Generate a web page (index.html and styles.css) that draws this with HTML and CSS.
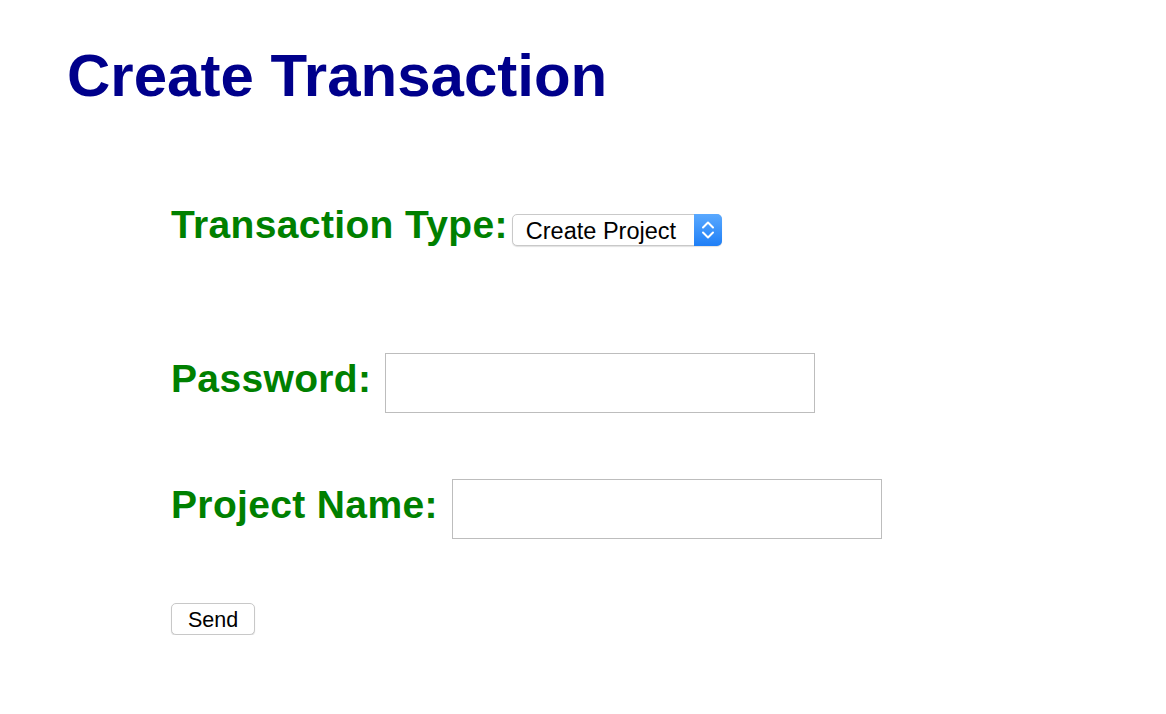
FILE: index.html
```html
<!DOCTYPE html>
<html>
<head>
<meta charset="utf-8">
<title>Create Transaction</title>
<link rel="stylesheet" href="styles.css">
</head>
<body>
<h1 class="title">Create Transaction</h1>
<form class="form">
  <div class="row row-type">
    <label class="label" for="type">Transaction Type:</label>
    <div class="select-wrap">
      <select class="select" id="type">
        <option>Create Project</option>
      </select>
      <span class="select-arrow">
        <svg width="28" height="32" viewBox="0 0 28 32">
          <path d="M9 13.5 L14 8.5 L19 13.5" fill="none" stroke="#fff" stroke-width="2" stroke-linecap="round" stroke-linejoin="round"/>
          <path d="M9 18.5 L14 23.5 L19 18.5" fill="none" stroke="#fff" stroke-width="2" stroke-linecap="round" stroke-linejoin="round"/>
        </svg>
      </span>
    </div>
  </div>
  <div class="row row-field">
    <label class="label label-field" for="pw">Password:</label>
    <input class="input" id="pw" type="password">
  </div>
  <div class="row row-field">
    <label class="label label-field" for="pn">Project Name:</label>
    <input class="input" id="pn" type="text">
  </div>
  <button class="send" type="button">Send</button>
</form>
</body>
</html>
```
FILE: styles.css
```css
html, body {
  margin: 0;
  padding: 0;
  background: #fff;
}
body {
  font-family: "Liberation Sans", Arial, sans-serif;
}
.title {
  margin: 41px 0 0 67px;
  font-size: 60px;
  line-height: 69px;
  font-weight: bold;
  color: #00008b;
}
.form {
  padding-left: 171px;
  margin-top: 92px;
  display: flex;
  flex-direction: column;
  align-items: flex-start;
}
.row {
  display: flex;
  align-items: flex-start;
}
.label {
  font-size: 39px;
  line-height: 45px;
  font-weight: bold;
  letter-spacing: 0.35px;
  color: #008000;
}
.row-type .label {
  margin-right: 4px;
}
.select-wrap {
  position: relative;
  margin-top: 12px;
  width: 210px;
  height: 32px;
}
.select {
  -webkit-appearance: none;
  appearance: none;
  width: 210px;
  height: 32px;
  box-sizing: border-box;
  border: 1px solid #c9c9c9;
  border-radius: 5px;
  background: #fff;
  box-shadow: 0 1px 1px rgba(0,0,0,0.12);
  font-family: "Liberation Sans", Arial, sans-serif;
  font-size: 23.5px;
  color: #000;
  padding: 1px 0 0 13px;
  margin: 0;
  outline: none;
}
.select-arrow {
  position: absolute;
  top: 0;
  right: 0;
  width: 28px;
  height: 32px;
  border-radius: 0 5px 5px 0;
  background: linear-gradient(#5aa9ff, #1f7ff6);
  pointer-events: none;
  display: flex;
}
.row-field {
  margin-top: 106px;
}
.row-field + .row-field {
  margin-top: 66px;
}
.label-field {
  margin-top: 3px;
  margin-right: 14px;
}
.input {
  width: 430px;
  height: 60px;
  box-sizing: border-box;
  border: 1px solid #bdbdbd;
  border-radius: 0;
  margin: 0;
  padding: 0 6px;
  font-size: 22px;
  outline: none;
}
.send {
  margin-top: 64px;
  width: 84px;
  height: 32px;
  box-sizing: border-box;
  border: 1px solid #c8c8c8;
  border-radius: 5px;
  background: #fff;
  box-shadow: 0 1px 1px rgba(0,0,0,0.15);
  font-family: "Liberation Sans", Arial, sans-serif;
  font-size: 21.5px;
  color: #000;
  padding: 3px 0 0;
}
```
